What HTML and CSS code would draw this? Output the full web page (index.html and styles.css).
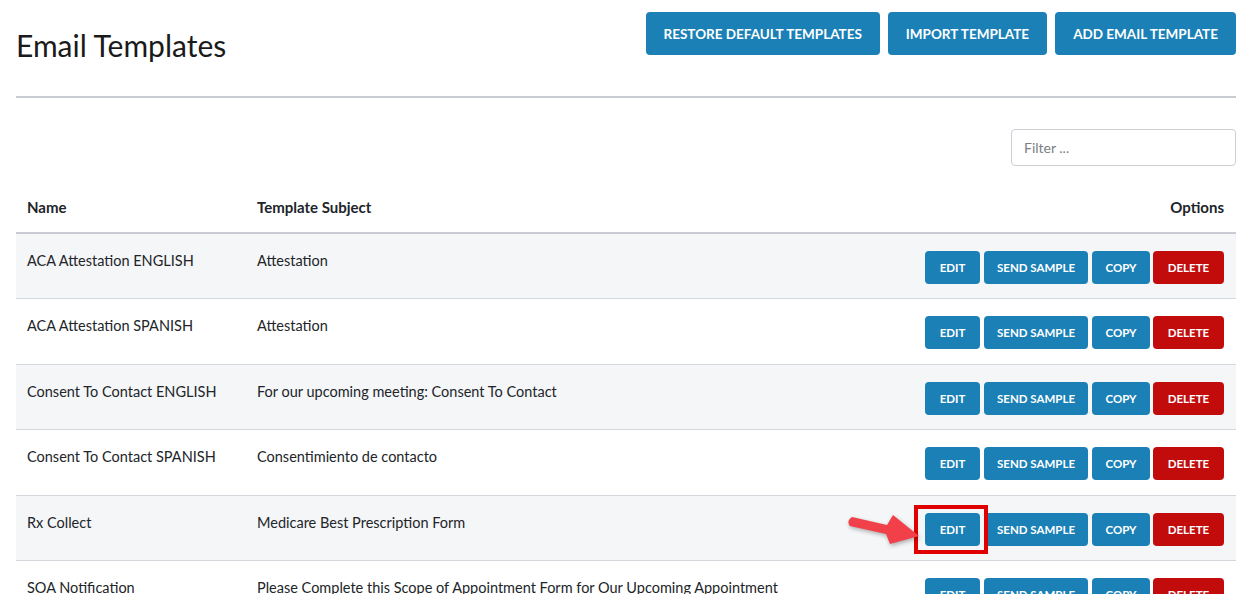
FILE: index.html
```html
<!DOCTYPE html>
<html lang="en">
<head>
  <meta charset="UTF-8" />
  <title>Email Templates</title>
  <link rel="stylesheet" href="styles.css">
</head>
<body>

<div class="page">
  <!-- Title bar -->
  <div class="page-head">
    <h1>Email Templates</h1>
    <div class="head-actions">
      <button class="btn btn-lg">Restore Default Templates</button>
      <button class="btn btn-lg">Import Template</button>
      <button class="btn btn-lg">Add Email Template</button>
    </div>
  </div>

  <div class="filter-row">
    <input type="text" class="filter" placeholder="Filter ..." />
  </div>

  <!-- Templates table -->
  <table class="templates">
    <thead>
      <tr>
        <th class="col-name">Name</th>
        <th>Template Subject</th>
        <th class="col-opts">Options</th>
      </tr>
    </thead>
    <tbody>
      <tr>
        <td>ACA Attestation ENGLISH</td>
        <td>Attestation</td>
        <td class="col-opts"><div class="opts"><button class="btn b-edit">Edit</button><button class="btn b-send">Send Sample</button><button class="btn b-copy">Copy</button><button class="btn b-del">Delete</button></div></td>
      </tr>
      <tr>
        <td>ACA Attestation SPANISH</td>
        <td>Attestation</td>
        <td class="col-opts"><div class="opts"><button class="btn b-edit">Edit</button><button class="btn b-send">Send Sample</button><button class="btn b-copy">Copy</button><button class="btn b-del">Delete</button></div></td>
      </tr>
      <tr>
        <td>Consent To Contact ENGLISH</td>
        <td>For our upcoming meeting: Consent To Contact</td>
        <td class="col-opts"><div class="opts"><button class="btn b-edit">Edit</button><button class="btn b-send">Send Sample</button><button class="btn b-copy">Copy</button><button class="btn b-del">Delete</button></div></td>
      </tr>
      <tr>
        <td>Consent To Contact SPANISH</td>
        <td>Consentimiento de contacto</td>
        <td class="col-opts"><div class="opts"><button class="btn b-edit">Edit</button><button class="btn b-send">Send Sample</button><button class="btn b-copy">Copy</button><button class="btn b-del">Delete</button></div></td>
      </tr>
      <tr>
        <td>Rx Collect</td>
        <td>Medicare Best Prescription Form</td>
        <td class="col-opts">
          <div class="opts">
            <span class="callout">
              <button class="btn b-edit">Edit</button>
              <span class="callout-box"></span>
              <!-- annotation arrow pointing at the edit button -->
              <svg class="callout-arrow" width="80" height="36" viewBox="0 0 80 36">
                <path d="M7 4 L42 12 L48 2 L74 23 L45 31 L41 21 L5 13 Q1 8 7 4 Z" fill="#f1404a" />
              </svg>
            </span><button class="btn b-send">Send Sample</button><button class="btn b-copy">Copy</button><button class="btn b-del">Delete</button>
          </div>
        </td>
      </tr>
      <tr>
        <td>SOA Notification</td>
        <td>Please Complete this Scope of Appointment Form for Our Upcoming Appointment</td>
        <td class="col-opts"><div class="opts"><button class="btn b-edit">Edit</button><button class="btn b-send">Send Sample</button><button class="btn b-copy">Copy</button><button class="btn b-del">Delete</button></div></td>
      </tr>
    </tbody>
  </table>
</div>

</body>
</html>
```

FILE: styles.css
```css
* { margin: 0; padding: 0; box-sizing: border-box; }
body {
  font-family: 'Lato', 'Liberation Sans', sans-serif;
  background: #fff;
  color: #212529;
  overflow: hidden;
}
.page {
  padding: 12px 18px 0 16px;
}
.page-head {
  display: flex;
  justify-content: space-between;
  align-items: flex-start;
  padding-bottom: 29px;
  border-bottom: 2px solid #c9ccd3;
}
h1 {
  font-size: 30px;
  font-weight: 400;
  line-height: 43px;
  margin-top: 12px;
  color: #1a1a1a;
}
.head-actions {
  display: flex;
  gap: 8px;
}
.btn {
  font-family: inherit;
  border: none;
  border-radius: 4px;
  background: #1a80b6;
  color: #fff;
  text-transform: uppercase;
  font-weight: 700;
  font-size: 11.5px;
  height: 33px;
  padding: 0 10px;
  cursor: pointer;
}
.btn-lg {
  height: 43px;
  font-size: 13.5px;
  padding: 0 18px;
}
.b-edit { width: 55px; }
.b-send { width: 104px; }
.b-copy { width: 58px; margin-right: -1px; }
.b-del { width: 71px; background: #c20c0c; }
.filter-row {
  display: flex;
  justify-content: flex-end;
  padding-top: 31px;
  padding-bottom: 14px;
}
.filter {
  width: 225px;
  height: 37px;
  border: 1px solid #ccd0d5;
  border-radius: 4px;
  padding: 0 12px;
  font-family: inherit;
  font-size: 14px;
}
.filter::placeholder { color: #7a7f85; }
.templates {
  width: 100%;
  border-collapse: collapse;
  font-size: 14.5px;
}
.templates th {
  text-align: left;
  font-weight: 700;
  font-size: 15px;
  padding: 16px 12px 14px 11px;
  line-height: 22px;
  border-bottom: 2px solid #c9ccd3;
}
.templates th.col-name { width: 230px; }
.templates td {
  vertical-align: top;
  padding: 16px 12px 14.4px 11px;
  line-height: 22px;
  border-bottom: 1px solid #d4d7dc;
}
.templates tbody tr:nth-child(odd) { background: #f5f6f8; }
.templates .col-opts { text-align: right; }
.opts {
  display: flex;
  justify-content: flex-end;
  gap: 4px;
  margin-top: 1px;
}
.callout {
  position: relative;
  display: inline-flex;
}
.callout-box {
  position: absolute;
  left: -11px; top: -8px;
  width: 74px; height: 49px;
  border: 4px solid #e10000;
}
.callout-arrow {
  position: absolute;
  left: -80px; top: 0;
  filter: drop-shadow(1px 2px 2px rgba(0,0,0,0.3));
}
```
